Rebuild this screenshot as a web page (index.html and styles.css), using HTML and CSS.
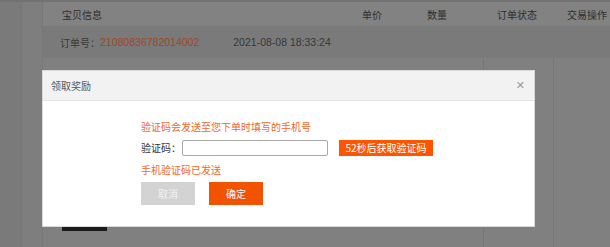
FILE: index.html
```html
<!DOCTYPE html>
<html lang="zh-CN">
<head>
    <meta charset="UTF-8">
    <meta name="viewport" content="width=device-width, initial-scale=1.0">
    <title>领取奖励</title>
    <link rel="stylesheet" href="styles.css">
</head>
<body>
    <div class="page">
        <div class="side"></div>
        <div class="side side-inner"></div>
        <div class="main">
            <div class="thead">
                <div class="th th-info">宝贝信息</div>
                <div class="th th-price">单价</div>
                <div class="th th-qty">数量</div>
                <div class="th th-status">订单状态</div>
                <div class="th th-action">交易操作</div>
            </div>
            <div class="order-row">
                <span class="order-label">订单号：</span><span class="order-no">21080836782014002</span>
                <span class="order-date">2021-08-08 18:33:24</span>
            </div>
            <div class="items">
                <div class="item-info">
                    <div class="dark-btn"></div>
                </div>
                <div class="item-col"></div>
                <div class="item-col item-last"></div>
            </div>
        </div>
    </div>

    <div class="modal">
        <div class="modal-header">
            <span class="modal-title">领取奖励</span>
            <span class="modal-close">&#x2715;</span>
        </div>
        <div class="modal-body">
            <p class="tip">验证码会发送至您下单时填写的手机号</p>
            <div class="form-row">
                <label class="label" for="code">验证码：</label>
                <input class="code-input" id="code" type="text">
                <button class="send-btn">52秒后获取验证码</button>
            </div>
            <p class="tip sent">手机验证码已发送</p>
            <div class="actions">
                <button class="btn btn-cancel">取消</button>
                <button class="btn btn-ok">确定</button>
            </div>
        </div>
    </div>
</body>
</html>
```

FILE: styles.css
```css
:root {
    --orange: #ee6a2c;
    --btn-orange: #f25300;
    --text: #333;
}

* {
    margin: 0;
    padding: 0;
    box-sizing: border-box;
    font-family: "Noto Sans CJK SC", "Liberation Sans", sans-serif;
}

body {
    width: 610px;
    height: 247px;
    overflow: hidden;
    background: #7d7d7d;
    font-size: 10px;
    color: var(--text);
}

.page {
    display: flex;
    height: 247px;
    border-top: 2px solid #727272;
}

.side {
    flex-shrink: 0;
    width: 22px;
    background: #7a7a7a;
    border-right: 1px solid #767676;
}

.side-inner {
    width: 21px;
    background: #7e7e7e;
    border-right: 1px solid #777;
}

.main {
    flex: 1;
    min-width: 0;
    display: flex;
    flex-direction: column;
    background: #808080;
}

.thead {
    display: flex;
    height: 24px;
    align-items: center;
    color: #2e2e2e;
    background: #828282;
}

.th { flex-shrink: 0; }
.th-info { width: 319px; padding-left: 19px; }
.th-price { width: 65px; }
.th-qty { width: 70px; }
.th-status { width: 70px; }
.th-action { flex: 1; white-space: nowrap; }

.order-row {
    display: flex;
    align-items: center;
    height: 32px;
    padding-left: 17px;
    background: #7a7a7a;
    color: #383838;
}

.order-no,
.order-date {
    font-family: "Liberation Sans", sans-serif;
    font-size: 10.5px;
}

.order-no {
    color: #9c4824;
}

.order-date {
    margin-left: 34px;
}

.items {
    flex: 1;
    display: flex;
}

.item-info {
    flex-shrink: 0;
    width: 440px;
    padding: 142px 0 0 19px;
}

.item-col {
    width: 70px;
    border-left: 1px solid #767676;
}

.item-last {
    flex: 1;
}

.dark-btn {
    width: 45px;
    height: 31px;
    background: #1b1b1b;
}

/* dialog */
.modal {
    position: absolute;
    left: 42px;
    top: 70px;
    width: 493px;
    height: 157px;
    background: #fff;
    border: 1px solid #d9d9d9;
}

.modal-header {
    display: flex;
    justify-content: space-between;
    align-items: center;
    height: 30px;
    padding: 0 9px 0 8px;
    background: #f2f2f2;
    border-bottom: 1px solid #e4e4e4;
}

.modal-title {
    color: #555;
}

.modal-close {
    color: #9a9a9a;
    font-size: 11px;
    font-family: "DejaVu Sans", sans-serif;
}

.modal-body {
    padding: 19px 0 0 98px;
}

.tip {
    color: var(--orange);
    line-height: 14px;
}

.form-row {
    display: flex;
    align-items: center;
    margin-top: 5px;
    height: 17px;
}

.label {
    width: 41px;
    color: #333;
}

.code-input {
    width: 146px;
    height: 16px;
    border: 1px solid #a8a8a8;
    border-radius: 2px;
    outline: none;
}

.send-btn {
    margin-left: 11px;
    width: 94px;
    height: 16px;
    border: none;
    background: #ff5500;
    color: #fff;
    font-size: 10px;
}

.sent {
    margin-top: 7px;
}

.actions {
    display: flex;
    gap: 14px;
    margin-top: 5px;
}

.btn {
    width: 54px;
    height: 23px;
    border: none;
    color: #fff;
    font-size: 10px;
}

.btn-cancel {
    background: #d3d3d3;
    color: #f2f2f2;
}

.btn-ok {
    background: var(--btn-orange);
}
```
